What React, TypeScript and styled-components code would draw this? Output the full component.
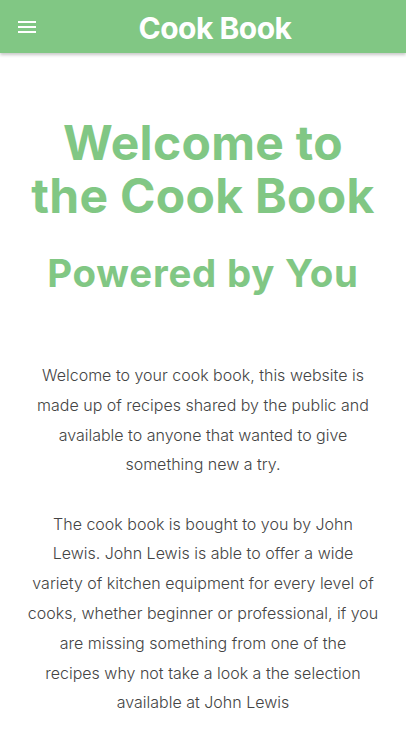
import React from "react";
import styled, { createGlobalStyle } from "styled-components";

const Global = createGlobalStyle`
  html, body { margin: 0; padding: 0; background: #fff; }
  body { font-family: Inter, "Liberation Sans", sans-serif; }
`;

const Header = styled.header`
  height: 53px;
  background: #81c784;
  display: flex;
  align-items: center;
  box-shadow: 0 2px 3px rgba(0, 0, 0, 0.22);
`;

const MenuButton = styled.button`
  margin-left: 18px;
  background: none;
  border: 0;
  padding: 0;
  display: flex;
  cursor: pointer;
`;

const Title = styled.h1`
  flex: 1;
  margin: 0 12px 0 0;
  padding-top: 2px;
  text-align: center;
  color: #fff;
  font-family: Inter, sans-serif;
  font-weight: 700;
  font-size: 30px;
  letter-spacing: -0.5px;
`;

const Main = styled.main`
  padding: 63px 27px 20px;
  text-align: center;
`;

const Hero = styled.h2<{ $size: number; $lh: number; $ls: number }>`
  margin: 0;
  color: #81c784;
  font-family: Inter, sans-serif;
  font-weight: 700;
  font-size: ${(p) => p.$size}px;
  line-height: ${(p) => p.$lh}px;
  letter-spacing: ${(p) => p.$ls}px;
`;

const Sub = styled(Hero)`
  margin-top: 28px;
`;

const Body = styled.div`
  margin-top: 65px;
  font-family: Inter, sans-serif;
  font-weight: 300;
  font-size: 16px;
  line-height: 29.8px;
  color: #444;
`;

const Para = styled.p`
  margin: 0 0 29.5px;
`;

export default function App() {
  return (
    <>
      <Global />
      <Header>
        <MenuButton aria-label="menu">
          <svg width="18" height="12" viewBox="0 0 18 12">
            <rect x="0" y="0" width="18" height="2" fill="#fff" />
            <rect x="0" y="5" width="18" height="2" fill="#fff" />
            <rect x="0" y="10" width="18" height="2" fill="#fff" />
          </svg>
        </MenuButton>
        <Title>Cook Book</Title>
      </Header>
      <Main>
        <Hero $size={48} $lh={53} $ls={0.3}>Welcome to the Cook Book</Hero>
        <Sub as="h3" $size={38.4} $lh={46} $ls={0.8}>Powered by You</Sub>
        <Body>
          <Para>
            Welcome to your cook book, this website is made up of recipes shared by the public and available to anyone that wanted to give something new a try.
          </Para>
          <Para>
            The cook book is bought to you by John<br />
            Lewis. John Lewis is able to offer a wide variety of kitchen equipment for every level of cooks, whether beginner or professional, if you are missing something from one of the<br />
            recipes why not take a look a the selection available at John Lewis
          </Para>
        </Body>
      </Main>
    </>
  );
}
